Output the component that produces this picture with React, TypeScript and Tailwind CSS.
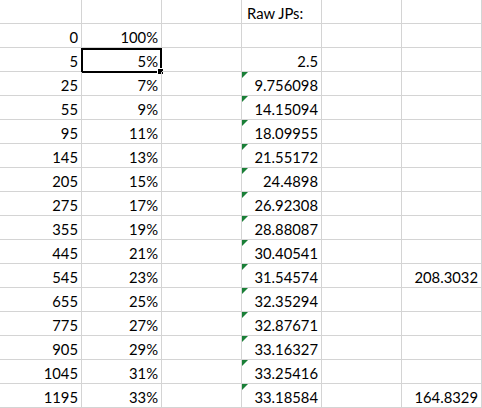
import React from "react";

type Cell = { v: string; left?: boolean; flag?: boolean };

const rows: Cell[][] = [
  [{ v: "" }, { v: "" }, { v: "" }, { v: "Raw JPs:", left: true }, { v: "" }, { v: "" }],
  [{ v: "0" }, { v: "100%" }, { v: "" }, { v: "" }, { v: "" }, { v: "" }],
  [{ v: "5" }, { v: "5%" }, { v: "" }, { v: "2.5" }, { v: "" }, { v: "" }],
];

const data: [string, string, string, string?][] = [
  ["25", "7%", "9.756098"],
  ["55", "9%", "14.15094"],
  ["95", "11%", "18.09955"],
  ["145", "13%", "21.55172"],
  ["205", "15%", "24.4898"],
  ["275", "17%", "26.92308"],
  ["355", "19%", "28.88087"],
  ["445", "21%", "30.40541"],
  ["545", "23%", "31.54574", "208.3032"],
  ["655", "25%", "32.35294"],
  ["775", "27%", "32.87671"],
  ["905", "29%", "33.16327"],
  ["1045", "31%", "33.25416"],
  ["1195", "33%", "33.18584", "164.8329"],
];

data.forEach(([a, b, c, d]) => {
  rows.push([
    { v: a },
    { v: b },
    { v: "" },
    { v: c, flag: true },
    { v: "" },
    { v: d ?? "" },
  ]);
});

export default function App() {
  return (
    <div
      className="w-[482px] h-[408px] overflow-hidden bg-white text-black text-[14.8px]"
      style={{ fontFamily: "Lato, 'Liberation Sans', sans-serif" }}
    >
      <div className="grid grid-cols-[82px_repeat(5,80px)]">
        {rows.map((row, r) =>
          row.map((cell, c) => (
            <div
              key={`${r}-${c}`}
              className={`relative h-[24px] box-border border-r border-b border-[#d4d4d4] px-[3px] pt-[3px] leading-[20px] whitespace-nowrap ${
                cell.left ? "text-left pl-[5px]" : "text-right"
              }`}
            >
              {cell.flag && (
                <span className="absolute left-0 top-0 w-0 h-0 border-t-[6px] border-r-[6px] border-t-[#1a7f37] border-r-transparent" />
              )}
              {cell.v}
              {r === 2 && c === 1 && (
                <>
                  <span className="absolute -left-[1px] top-0 w-[81px] h-[25px] border-2 border-black pointer-events-none" />
                  <span className="absolute -right-[3px] -bottom-[4px] w-[7px] h-[7px] bg-black border border-white" />
                </>
              )}
            </div>
          ))
        )}
      </div>
    </div>
  );
}
